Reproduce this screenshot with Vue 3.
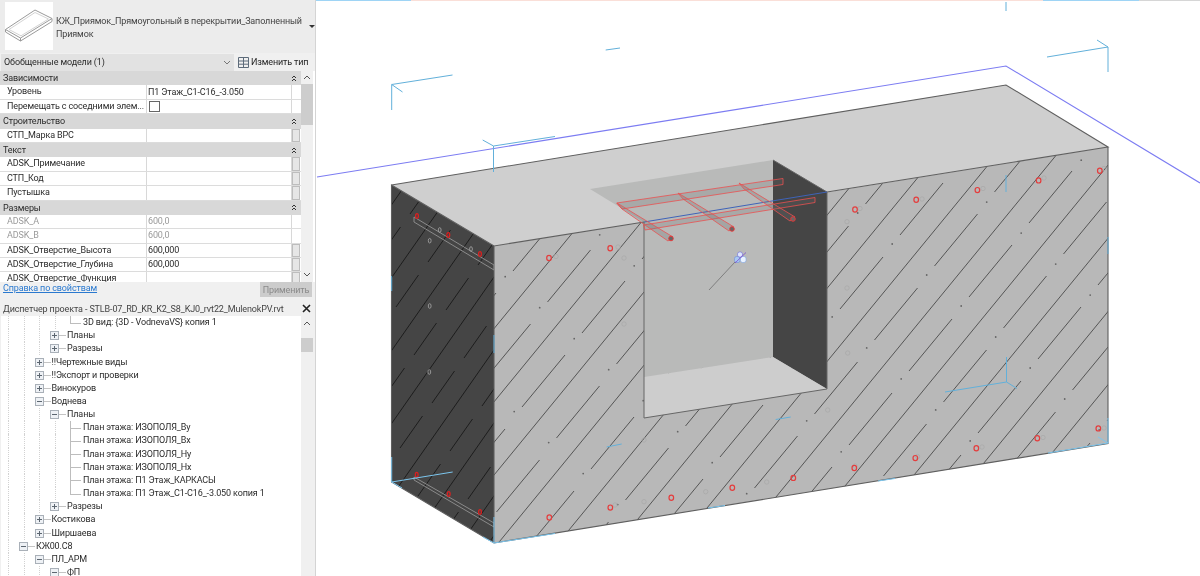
<script setup>
const sections = [
  { title: 'Зависимости', rows: [
    { name: 'Уровень', value: 'П1 Этаж_С1-С16_-3.050' },
    { name: 'Перемещать с соседними элем...', check: true },
  ] },
  { title: 'Строительство', rows: [{ name: 'СТП_Марка ВРС', btn: true }] },
  { title: 'Текст', rows: [
    { name: 'ADSK_Примечание', btn: true },
    { name: 'СТП_Код', btn: true },
    { name: 'Пустышка', btn: true },
  ] },
  { title: 'Размеры', rows: [
    { name: 'ADSK_A', value: '600,0', muted: true },
    { name: 'ADSK_B', value: '600,0', muted: true },
    { name: 'ADSK_Отверстие_Высота', value: '600,000', btn: true },
    { name: 'ADSK_Отверстие_Глубина', value: '600,000', btn: true },
    { name: 'ADSK_Отверстие_Функция', btn: true },
  ] },
]

const tree = [
  { l: 3, t: '3D вид: {3D - VodnevaVS} копия 1', k: 'leaf', last: true },
  { l: 2, t: 'Планы', k: 'plus' },
  { l: 2, t: 'Разрезы', k: 'plus' },
  { l: 1, t: '!!Чертежные виды', k: 'plus' },
  { l: 1, t: '!!Экспорт и проверки', k: 'plus' },
  { l: 1, t: 'Винокуров', k: 'plus' },
  { l: 1, t: 'Воднева', k: 'minus' },
  { l: 2, t: 'Планы', k: 'minus' },
  { l: 3, t: 'План этажа: ИЗОПОЛЯ_Ву', k: 'leaf' },
  { l: 3, t: 'План этажа: ИЗОПОЛЯ_Вх', k: 'leaf' },
  { l: 3, t: 'План этажа: ИЗОПОЛЯ_Ну', k: 'leaf' },
  { l: 3, t: 'План этажа: ИЗОПОЛЯ_Нх', k: 'leaf' },
  { l: 3, t: 'План этажа: П1 Этаж_КАРКАСЫ', k: 'leaf' },
  { l: 3, t: 'План этажа: П1 Этаж_С1-С16_-3.050 копия 1', k: 'leaf', last: true },
  { l: 2, t: 'Разрезы', k: 'plus' },
  { l: 1, t: 'Костикова', k: 'plus' },
  { l: 1, t: 'Ширшаева', k: 'plus' },
  { l: 0, t: 'КЖ00.С8', k: 'minus' },
  { l: 1, t: 'ПЛ_АРМ', k: 'minus' },
  { l: 2, t: 'ФП', k: 'minus' },
]

// штриховка передней грани: длинные линии + пунктир
const longFront = []
for (let k = -6; k < 6; k++) {
  const x0 = 828.3 + 60 * k
  longFront.push({ x1: x0 - 190 / 1.22, y1: 550, x2: x0 + 220 / 1.22, y2: 140 })
}
const dashFront = []
for (let k = -14; k < 10; k++) {
  for (let n = -6; n < 12; n++) {
    const x = 840 + 34.5 * k + 60 * n
    const y = 309 + 31 * k - 74 * n
    if (y > 140 && y < 620) dashFront.push({ x1: x, y1: y, x2: x + 43, y2: y - 52 })
  }
}
const dotsFront = []
for (let m = -4; m < 4; m++) {
  for (let n = -6; n < 12; n++) {
    dotsFront.push({ x: 857.7 + 129 * m + 34.5 * n, y: 213 - 10.9 * m + 31 * n })
  }
}

// то же на тёмной боковой грани
const longSide = []
for (let k = -2; k < 6; k++) {
  const x0 = 334 + 51 * k
  longSide.push({ x1: x0 - 200 / 1.43, y1: 560, x2: x0 + 200 / 1.43, y2: 160 })
}
const dashSide = []
for (let i = -6; i < 9; i++) {
  for (let n = -8; n < 9; n++) {
    const x = 396 + 18 * i + 32 * n
    const y = 307 + 48 * i - 45 * n
    dashSide.push({ x1: x, y1: y, x2: x + 22.5, y2: y - 32 })
  }
}

const redFront = []
for (const i of [0, 1, 5, 6, 7, 8, 9]) redFront.push({ x: 549 + 61.2 * i, y: 258 - 9.7 * i })
for (let i = 0; i < 10; i++) redFront.push({ x: 549.3 + 61 * i, y: 517.5 - 9.9 * i })
const redSide = [[417, 216], [448.3, 235], [480, 254], [416.7, 474.7], [448.7, 494], [480, 512]]
const greyFront = [
  [847, 221.7], [847, 288], [847.7, 353], [624, 258], [624, 324], [644, 501.7], [705.7, 491.7],
  [766.7, 482], [644, 440], [827.7, 410], [556, 256.5], [618, 247], [860, 208.5], [922, 199], [983, 188.5],
  [1044, 178], [1104, 168.5], [615, 505], [855, 466], [917.5, 456.5], [982, 447], [1043, 437.5], [1104, 428],
]
const greySide = [[429.7, 240.7], [439.7, 230], [471, 249], [429.7, 306], [429.3, 372]]

const cyan = [
  'M391.7 110V84.5L452.5 75M391.7 84.5L402.5 92',
  'M493.5 172V146L555 136.5M493.5 146L482.7 140',
  'M605.7 50L620 48',
  'M1108 72V47L1047 57M1108 47L1097 40',
  'M1006 2V11M1006 175V192M1006.5 357V382L945 392M1006.5 382L1017 388.5',
  'M1108 237V254',
  'M606.7 447L621.7 444M775.7 419.5L790.7 417',
  'M391.7 276V291M494 335V353',
]
const cyanPale = [
  'M1108 418V443L1098 437M1108 443L1048 453',
  'M878 481L895 478.5M708 508L725 505.5',
  'M391.7 457V482L452.7 472M391.7 482L402 488',
  'M494 517V543L555 533.5M494 543L483 537',
]

const bars = [
  'M616.7 203L783 178.5L783 184.5L622 209Z',
  'M643.5 225L815 197.5L815 202.5L645 230Z',
]
const cross = [
  { p: 'M617 203L673 237L668 241L622 209Z', cx: 671, cy: 238.5 },
  { p: 'M678 193L734 227L729 231L683 199Z', cx: 732, cy: 229 },
  { p: 'M739 183L795 217L790 221L744 189Z', cx: 793, cy: 219 },
]
</script>

<template>
  <div class="app">
    <aside class="panel">
      <div class="type-head">
        <div class="thumb">
          <svg width="48" height="48" viewBox="0 0 48 48">
            <path d="M.5 27.5L30 8L47 16.5L15.5 36Z" fill="#fff" stroke="#9a9a9a" />
            <path d="M.5 27.5V30L15.5 39L47 19.5V16.5M15.5 36V39" fill="none" stroke="#9a9a9a" />
            <path d="M4 27.5L30 10.5L43.5 17L16 33.8Z" fill="none" stroke="#d4d4d4" />
          </svg>
        </div>
        <div class="type-name">КЖ_Приямок_Прямоугольный в перекрытии_Заполненный Приямок</div>
        <span class="type-arrow"></span>
      </div>

      <div class="select-row">
        <div class="select">
          <span>Обобщенные модели (1)</span>
          <svg width="8" height="5" viewBox="0 0 8 5"><path d="M1 1L4 4L7 1" fill="none" stroke="#777" /></svg>
        </div>
        <div class="edit-type">
          <svg width="11" height="11" viewBox="0 0 11 11">
            <path d="M.5 .5H10.5V10.5H.5ZM5.5 .5V10.5M.5 4H10.5M.5 7.2H10.5" fill="none" stroke="#5d6b7a" />
          </svg>
          <span>Изменить тип</span>
        </div>
      </div>

      <div class="props">
        <div class="props-table">
          <template v-for="s in sections" :key="s.title">
            <div class="section">
              <span>{{ s.title }}</span>
              <svg width="6" height="7" viewBox="0 0 6 7"><path d="M1 3L3 1L5 3M1 6L3 4L5 6" fill="none" stroke="#333" /></svg>
            </div>
            <div v-for="r in s.rows" :key="r.name" class="row" :class="{ muted: r.muted }">
              <div class="cell-name">{{ r.name }}</div>
              <div class="cell-value">
                <span v-if="r.check" class="check"></span>
                {{ r.value }}
              </div>
              <div class="cell-btn"><span v-if="r.btn" class="mini-btn"></span></div>
            </div>
          </template>
        </div>
        <div class="scrollbar">
          <svg width="8" height="5" viewBox="0 0 8 5"><path d="M1 4L4 1L7 4" fill="none" stroke="#555" /></svg>
          <div class="thumb-bar"></div>
          <svg class="down" width="8" height="5" viewBox="0 0 8 5"><path d="M1 1L4 4L7 1" fill="none" stroke="#555" /></svg>
        </div>
      </div>

      <div class="props-foot">
        <a class="help">Справка по свойствам</a>
        <button class="apply">Применить</button>
      </div>

      <div class="browser-title">
        <span>Диспетчер проекта - STLB-07_RD_KR_K2_S8_KJ0_rvt22_MulenokPV.rvt</span>
        <svg width="9" height="9" viewBox="0 0 9 9"><path d="M1 1L8 8M8 1L1 8" stroke="#222" stroke-width="1.6" /></svg>
      </div>

      <div class="browser">
        <div class="tree">
          <div v-for="(n, i) in tree" :key="i" class="node">
            <span v-for="g in n.l + 1" :key="g" class="guide"></span>
            <template v-if="n.k === 'leaf'">
              <span class="leaf" :class="{ last: n.last }"></span>
            </template>
            <template v-else>
              <svg class="pm" width="9" height="9" viewBox="0 0 9 9">
                <rect x=".5" y=".5" width="8" height="8" fill="#eef1f5" stroke="#a9b0b8" />
                <path :d="n.k === 'plus' ? 'M2 4.5H7M4.5 2V7' : 'M2 4.5H7'" stroke="#5c6670" />
              </svg>
              <span class="dash"></span>
            </template>
            <span class="label">{{ n.t }}</span>
          </div>
        </div>
        <div class="scrollbar tree-bar">
          <svg width="8" height="5" viewBox="0 0 8 5"><path d="M1 4L4 1L7 4" fill="none" stroke="#555" /></svg>
          <div class="thumb-bar"></div>
        </div>
      </div>
    </aside>

    <main class="view">
      <div class="tabs">
        <span class="tab t1"></span><span class="tab t2"></span><span class="tab t3"></span><span class="tab t4"></span>
      </div>
      <svg class="canvas" width="884" height="576" viewBox="316 0 884 576">
        <defs>
          <clipPath id="front-clip"><path d="M494 246L1108 147V443.5L494 543Z" /></clipPath>
          <clipPath id="side-clip"><path d="M391.5 185L494 246V543L391.5 482Z" /></clipPath>
        </defs>

        <path d="M317 177L1006 66L1200 183" fill="none" stroke="#7c7cf2" stroke-width="1.1" />

        <path d="M391.5 185L1006 85L1108 147L494 246Z" fill="#cfcfcf" />
        <path d="M494 246L1108 147V443.5L494 543Z" fill="#b8b8b8" />
        <path d="M391.5 185L494 246V543L391.5 482Z" fill="#454545" />

        <g clip-path="url(#front-clip)" stroke="#555" stroke-width="1">
          <line v-for="(l, i) in longFront" :key="'lf' + i" :x1="l.x1" :y1="l.y1" :x2="l.x2" :y2="l.y2" />
          <line v-for="(l, i) in dashFront" :key="'df' + i" :x1="l.x1" :y1="l.y1" :x2="l.x2" :y2="l.y2" />
          <circle v-for="(d, i) in dotsFront" :key="'d' + i" :cx="d.x" :cy="d.y" r=".9" fill="#666" stroke="none" />
        </g>
        <g clip-path="url(#side-clip)" stroke="#1d1d1d" stroke-width="1">
          <line v-for="(l, i) in longSide" :key="'ls' + i" :x1="l.x1" :y1="l.y1" :x2="l.x2" :y2="l.y2" />
          <line v-for="(l, i) in dashSide" :key="'ds' + i" :x1="l.x1" :y1="l.y1" :x2="l.x2" :y2="l.y2" />
        </g>

        <!-- проём -->
        <path d="M590 189L773 160V357L644 377V222Z" fill="#b9bab9" />
        <path d="M773 160L827 192V389L773 357Z" fill="#454545" />
        <path d="M644 377L773 357L827 389L644 418Z" fill="#cdcdcd" />

        <path d="M391.5 185L1006 85L1108 147L827 192M644 222L494 246L391.5 185V482L494 543L1108 443.5V147M494 246V543" fill="none" stroke="#5f5f5f" stroke-width="1.1" />
        <path d="M644 222V418L827 389V192M773 160L827 192" fill="none" stroke="#666" />
        <path d="M644 222L827 192" fill="none" stroke="#3f63b8" />

        <!-- закладные на боковой грани -->
        <g fill="none" stroke="#8a8a8a">
          <path d="M414 217V222L494 270V265Z" />
          <path d="M414 477V480L494 527V523Z" />
        </g>
        <ellipse v-for="(c, i) in greySide" :key="'gs' + i" :cx="c[0]" :cy="c[1]" rx="1.4" ry="2.3" fill="none" stroke="#a8a8a8" stroke-width=".8" />
        <ellipse v-for="(c, i) in redSide" :key="'rs' + i" :cx="c[0]" :cy="c[1]" rx="1.4" ry="2.4" fill="none" stroke="#d82020" stroke-width="1.3" />
        <circle v-for="(c, i) in greyFront" :key="'gf' + i" :cx="c[0]" :cy="c[1]" r="2.2" fill="none" stroke="#a9a9a9" stroke-width=".8" />
        <ellipse v-for="(c, i) in redFront" :key="'rf' + i" :cx="c.x" :cy="c.y" rx="2.3" ry="2.6" fill="none" stroke="#e43d3d" stroke-width="1.2" />

        <!-- арматура -->
        <path v-for="(p, i) in bars" :key="'b' + i" :d="p" fill="rgba(110,110,110,.22)" stroke="#ea5050" stroke-width=".8" />
        <g v-for="(c, i) in cross" :key="'c' + i">
          <path :d="c.p" fill="rgba(110,110,110,.28)" stroke="#ea5050" stroke-width=".8" />
          <circle :cx="c.cx" :cy="c.cy" r="2.3" fill="#666" stroke="#e33" stroke-width=".9" />
        </g>

        <path v-for="(p, i) in cyan" :key="'cy' + i" :d="p" fill="none" stroke="#62b0da" stroke-width="1" />
        <path v-for="(p, i) in cyanPale" :key="'cp' + i" :d="p" fill="none" stroke="#7cc6ee" stroke-width="1" />

        <!-- указатель -->
        <path d="M709 290L735 262" stroke="#7f7f7f" />
        <g>
          <rect x="734.5" y="256.5" width="5.5" height="6" rx="2" fill="#a9c8f2" stroke="#6f8fd8" stroke-width=".6" />
          <rect x="740.5" y="256.5" width="5.5" height="6" rx="2" fill="#e8f2ff" stroke="#7fa6e6" stroke-width=".6" />
          <rect x="737.5" y="252" width="5" height="5" rx="2" fill="#dfe6ff" stroke="#6f6fd8" stroke-width=".6" />
          <path d="M735 263L746 252.5" stroke="#7a4bd0" stroke-width=".8" />
        </g>
      </svg>
    </main>
  </div>
</template>

<style>
html, body { margin: 0; background: #fff; overflow: hidden; }
</style>

<style scoped>
.app {
  display: flex; width: 1200px; height: 576px; overflow: hidden;
  font-family: Roboto, "Noto Sans", sans-serif; font-size: 9px; letter-spacing: -.13px; color: #2b2b2b;
  filter: blur(.25px);
}

.panel {
  width: 316px; height: 576px; flex-shrink: 0; box-sizing: border-box;
  background: #f0f0f0; border-right: 1px solid #d4d4d4;
  display: flex; flex-direction: column; overflow: hidden;
}

.type-head { height: 53px; display: flex; align-items: center; padding: 0 0 1px 5px; box-sizing: border-box; flex-shrink: 0; background: #ececec; }
.thumb { width: 48px; height: 48px; background: #fff; flex-shrink: 0; }
.type-name { width: 250px; margin-left: 3px; line-height: 12.5px; color: #444; margin-top: 3px; }
.type-arrow { width: 0; height: 0; margin-left: 3px; border-left: 3px solid transparent; border-right: 3px solid transparent; border-top: 3px solid #333; }

.select-row { height: 18px; display: flex; align-items: center; flex-shrink: 0; }
.select {
  width: 233px; height: 17px; margin-left: 1px; background: #e2e2e2; box-sizing: border-box; padding: 0 3px;
  display: flex; align-items: center; justify-content: space-between;
}
.edit-type { display: flex; align-items: center; gap: 2px; margin-left: 4px; color: #222; white-space: nowrap; }

.props { height: 211px; display: flex; flex-shrink: 0; overflow: hidden; background: #fff; }
.props-table { width: 301px; flex-shrink: 0; }
.section {
  height: 14.4px; line-height: 14px; box-sizing: border-box; background: #d8d8d8; padding: 0 4px 0 3px;
  display: flex; align-items: center; justify-content: space-between;
}
.row { height: 14.4px; display: flex; box-sizing: border-box; background: #fff; border-bottom: 1px solid #dcdcdc; line-height: 13px; }
.cell-name { width: 147px; box-sizing: border-box; padding-left: 7px; border-right: 1px solid #d8d8d8; white-space: nowrap; overflow: hidden; }
.cell-value { width: 145px; box-sizing: border-box; padding-left: 1px; border-right: 1px solid #d8d8d8; display: flex; align-items: center; }
.cell-btn { width: 9px; display: flex; }
.mini-btn { flex: 1; background: #e6e6e6; border: 1px solid #bdbdbd; margin-right: 1px; }
.row.muted { color: #9a9a9a; }
.check { width: 9px; height: 9px; margin-left: 1px; background: #fff; border: 1px solid #666; }

.scrollbar { width: 12px; background: #f0f0f0; display: flex; flex-direction: column; align-items: center; padding-top: 4px; box-sizing: border-box; }
.thumb-bar { width: 100%; height: 41px; margin-top: 4px; background: #cdcdcd; flex-shrink: 0; }
.down { margin-top: auto; margin-bottom: 5px; }
.tree-bar .thumb-bar { height: 14px; margin-top: 12px; }
.tree-bar { padding-top: 5px; }

.props-foot { height: 19px; display: flex; align-items: flex-start; justify-content: space-between; padding: 0 3px; flex-shrink: 0; }
.help { color: #2a79cf; text-decoration: underline; line-height: 13px; }
.apply {
  width: 52px; height: 15px; padding: 0; border: none; background: #cccccc; color: #8a8a8a;
  font: inherit; letter-spacing: inherit;
}

.browser-title { height: 15px; display: flex; align-items: center; justify-content: space-between; padding: 0 4px 0 3px; flex-shrink: 0; color: #444; white-space: nowrap; }

.browser { flex: 1; display: flex; min-height: 0; overflow: hidden; }
.tree { width: 300px; margin-left: 1px; background: #fff; flex-shrink: 0; overflow: hidden; }

.node { height: 13.17px; display: flex; align-items: center; padding-left: 7px; white-space: nowrap; line-height: 13px; }
.guide { width: 15.5px; height: 100%; flex-shrink: 0; box-sizing: border-box; border-left: 1px dotted #d2d2d2; }
.pm { flex-shrink: 0; margin-left: -4.5px; }
.dash { width: 7px; height: 1px; background: #c4c4c4; flex-shrink: 0; margin-right: 1px; }
.leaf { width: 13px; height: 100%; position: relative; flex-shrink: 0; }
.leaf::before { content: ""; position: absolute; left: 0; top: 0; bottom: 0; width: 1px; background: #bdbdbd; }
.leaf.last::before { bottom: 50%; }
.leaf::after { content: ""; position: absolute; left: 0; top: 50%; width: 11px; height: 1px; background: #bdbdbd; }

.view { flex: 1; position: relative; overflow: hidden; background: #fff; }
.canvas { display: block; }
.tabs { position: absolute; left: 0; top: 0; right: 0; height: 1px; display: flex; z-index: 1; }
.tab { display: block; height: 1px; }
.t1 { width: 95px; background: #9ed4f5; }
.t2 { width: 632px; background: #fadfd8; }
.t3 { width: 96px; background: #9ed4f5; }
.t4 { flex: 1; background: #d6d6d6; }
</style>
